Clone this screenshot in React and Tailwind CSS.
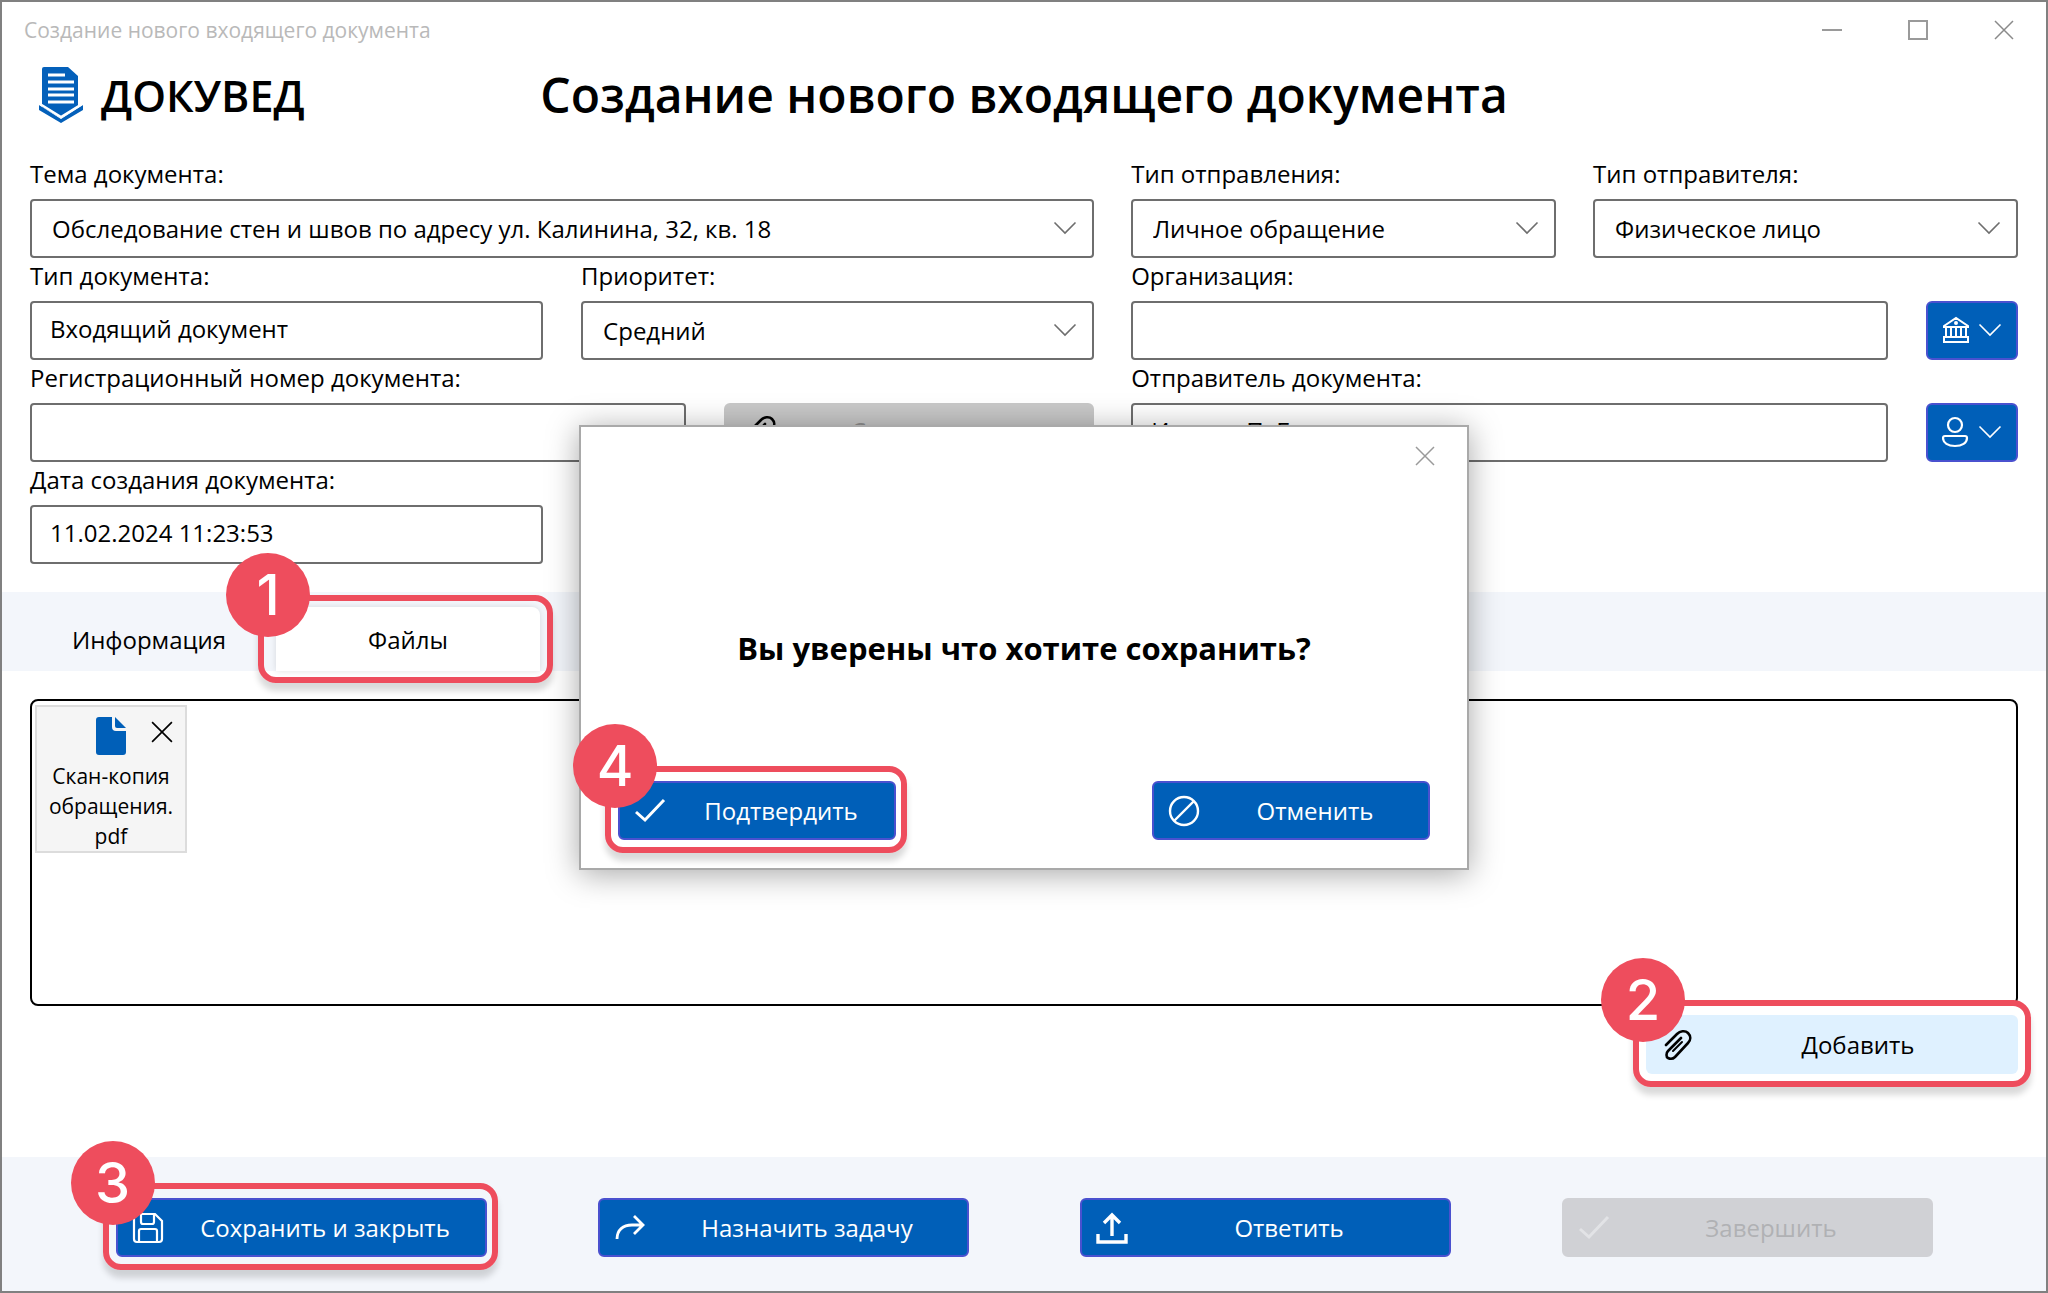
import React from 'react';

const ChevronDown = ({ className }) => (
    <svg className={className} viewBox="0 0 24 14" fill="none" stroke="currentColor" strokeWidth="1.6">
        <path d="M1.5 1.5 12 12 22.5 1.5" />
    </svg>
);

const Logo = () => (
    <svg className="h-14 w-11" viewBox="0 0 44 56">
        <path d="M5 0h24l10 9v31L22 51 3 40V2a2 2 0 0 1 2-2z" fill="#0460ba" />
        <path d="M0 38l22 14 22-14v5L22 56 0 43z" fill="#0460ba" />
        <path d="M1 37l21 13 21-13" fill="none" stroke="#fff" strokeWidth="2.4" />
        <path d="M9 8h17M9 15h26M9 22h26M9 28h26M9 35h26" stroke="#fff" strokeWidth="3" />
    </svg>
);

const CheckIcon = ({ className }) => (
    <svg className={className} viewBox="0 0 32 32" fill="none" stroke="currentColor" strokeWidth="3">
        <path d="M2 17l9 8L30 5" />
    </svg>
);

const BanIcon = ({ className }) => (
    <svg className={className} viewBox="0 0 32 32" fill="none" stroke="currentColor" strokeWidth="2.4">
        <circle cx="16" cy="16" r="14" />
        <path d="M6 26 26 6" />
    </svg>
);

const ClipIcon = ({ className }) => (
    <svg className={className} viewBox="0 0 28 32" fill="none" stroke="currentColor" strokeWidth="2.6" strokeLinecap="round">
        <path d="M2 16 13 5c3-3 8-4 11-1s3 7 0 10L11 28c-2 2-5 2-7 1s-2-5 0-7L17 9" />
        <path d="M9 22 18 13" strokeWidth="2" />
    </svg>
);

const SaveIcon = ({ className }) => (
    <svg className={className} viewBox="0 0 32 32" fill="none" stroke="currentColor" strokeWidth="2.2">
        <path d="M5 2h18l7 7v18a3 3 0 0 1-3 3H5a3 3 0 0 1-3-3V5a3 3 0 0 1 3-3z" />
        <path d="M9 2v8a2 2 0 0 0 2 2h9a2 2 0 0 0 2-2V2M7 30V19a2 2 0 0 1 2-2h14a2 2 0 0 1 2 2v11" />
    </svg>
);

const ForwardIcon = ({ className }) => (
    <svg className={className} viewBox="0 0 32 32" fill="none" stroke="currentColor" strokeWidth="2.8">
        <path d="M3 27c0-9 6-14 15-14h11M20 4l9 9-9 9" />
    </svg>
);

const UploadIcon = ({ className }) => (
    <svg className={className} viewBox="0 0 32 32" fill="none" stroke="currentColor" strokeWidth="3.4">
        <path d="M16 24V3M8 11l8-8 8 8M2 22v8h28v-8" />
    </svg>
);

const BankIcon = ({ className }) => (
    <svg className={className} viewBox="0 0 28 28" fill="none" stroke="currentColor" strokeWidth="2">
        <path d="M2 10 14 2l12 8v1H2zM4 11v10M9 11v10M14 11v10M19 11v10M24 11v10M2 21h24v5H2z" />
        <circle cx="14" cy="7" r="1" />
    </svg>
);

const PersonIcon = ({ className }) => (
    <svg className={className} viewBox="0 0 28 32" fill="none" stroke="currentColor" strokeWidth="2.2">
        <circle cx="13" cy="9" r="7" />
        <path d="M3 20h20a2 2 0 0 1 2 2c0 5-5 8-12 8S1 27 1 22a2 2 0 0 1 2-2z" />
    </svg>
);

const CloseIcon = ({ className }) => (
    <svg className={className} viewBox="0 0 20 20" fill="none" stroke="currentColor" strokeWidth="1.5">
        <path d="M1 1l18 18M19 1 1 19" />
    </svg>
);

const inputClass = 'h-[59px] w-full rounded-sm border-2 border-[#6e6e6e] bg-white text-black';

const Field = ({ id, label, className, children }) => (
    <div className={className}>
        <label htmlFor={id} className="block h-[43px] leading-9">{label}</label>
        {children}
    </div>
);

const TextField = ({ id, label, value, className }) => (
    <Field id={id} label={label} className={className}>
        <input id={id} type="text" defaultValue={value} className={`${inputClass} px-[18px] pb-1`} />
    </Field>
);

const SelectField = ({ id, label, value, className }) => (
    <Field id={id} label={label} className={className}>
        <div className="relative">
            <select id={id} className={`${inputClass} appearance-none px-5`}>
                <option>{value}</option>
            </select>
            <ChevronDown className="pointer-events-none absolute right-[17px] top-[22px] h-[14px] w-6 text-[#6e6e6e]" />
        </div>
    </Field>
);

const IconDropdown = ({ label, children }) => (
    <button type="button" aria-label={label} className="flex h-[59px] w-[92px] shrink-0 items-center justify-between rounded-md border-2 border-[#4a51cf] bg-[#005fb8] px-3.5 pb-0.5 text-white">
        {children}
        <ChevronDown className="h-[14px] w-6" />
    </button>
);

const Callout = ({ number, className }) => (
    <span className={`pointer-events-none absolute rounded-[18px] border-[6px] border-[#ee4d5d] shadow-[0_8px_6px_rgba(0,0,0,0.15)] ${className}`}>
        <span className="absolute -left-[38px] -top-12 flex h-[84px] w-[84px] items-center justify-center rounded-full bg-[#ee4d5d] font-['Inter',sans-serif] text-[56px] font-medium leading-none text-white">
            {number}
        </span>
    </span>
);

const ActionButton = ({ icon: Icon, label, callout, disabled, className }) => (
    <div className={`relative ${className}`}>
        <button
            disabled={disabled}
            className={`flex h-[59px] w-full items-center rounded-md border-2 px-3.5 ${disabled ? 'border-[#d0d1d5] bg-[#d0d1d5] text-[#b0b1b4]' : 'border-[#4a51cf] bg-[#005fb8] text-white'}`}
        >
            <Icon className={`h-8 w-8 shrink-0 ${disabled ? 'text-[#e2e3e6]' : ''}`} />
            <span className="flex-1 pl-4">{label}</span>
        </button>
        {callout && <Callout number={callout} className="-left-[13px] -right-[11px] -top-[15px] -bottom-[13px]" />}
    </div>
);

const ConfirmDialog = () => (
    <div role="dialog" aria-labelledby="confirm-title" className="absolute left-1/2 top-[423px] flex h-[445px] w-[890px] -translate-x-1/2 flex-col border-2 border-[#a9a9a9] bg-white shadow-[0_4px_30px_rgba(0,0,0,0.35)]">
        <div className="flex h-[58px] items-center justify-end pr-8">
            <button aria-label="Закрыть" className="text-[#9a9a9a]"><CloseIcon className="h-5 w-5" /></button>
        </div>
        <h2 id="confirm-title" className="flex flex-1 items-center justify-center pt-24 text-[31px] font-bold">Вы уверены что хотите сохранить?</h2>
        <div className="flex justify-between px-[37px] pb-7 pt-16">
            <ActionButton icon={CheckIcon} label="Подтвердить" callout={4} className="w-[278px]" />
            <ActionButton icon={BanIcon} label="Отменить" className="w-[278px]" />
        </div>
    </div>
);

const App = () => {
    return (
        <div className="relative flex min-h-screen flex-col border-2 border-[#808080] bg-white font-['Open_Sans','Noto_Sans',sans-serif] text-2xl text-black">
            <header className="flex h-14 items-center justify-between pl-[22px] pr-8">
                <span className="text-[21px] text-[#b9b9b9]">Создание нового входящего документа</span>
                <div className="flex items-center gap-[66px] text-[#8a8a8a]">
                    <button aria-label="Свернуть"><span className="block h-0.5 w-5 bg-[#9a9a9a]" /></button>
                    <button aria-label="Развернуть"><span className="block h-5 w-5 border-2 border-[#9a9a9a]" /></button>
                    <button aria-label="Закрыть окно"><CloseIcon className="h-5 w-5" /></button>
                </div>
            </header>

            <div className="grid grid-cols-[1fr_auto_1fr] items-center px-[37px] pb-[26px] pt-0.5">
                <div className="flex h-[70px] items-center gap-[18px]">
                    <Logo />
                    <span className="text-[43px] font-semibold leading-none">ДОКУВЕД</span>
                </div>
                <h1 className="text-5xl font-semibold leading-none">Создание нового входящего документа</h1>
            </div>

            <form className="grid grid-cols-[6fr_5fr] gap-x-[37px] px-7">
                <div>
                    <SelectField id="subject" label="Тема документа:" value="Обследование стен и швов по адресу ул. Калинина, 32, кв. 18" />
                    <div className="grid grid-cols-2 gap-x-[38px]">
                        <TextField id="doc-type" label="Тип документа:" value="Входящий документ" />
                        <SelectField id="priority" label="Приоритет:" value="Средний" />
                    </div>
                    <div className="flex items-end gap-[38px]">
                        <TextField id="reg-number" label="Регистрационный номер документа:" className="flex-1" />
                        <button type="button" disabled className="flex h-[59px] w-[370px] items-center rounded-md bg-[#c8c8c8] px-6 pb-1 text-[#8f8f8f]">
                            <ClipIcon className="h-8 w-7 text-black" />
                            <span className="flex-1 pl-2">Сканировать</span>
                        </button>
                    </div>
                    <div className="grid grid-cols-2 gap-x-[38px]">
                        <TextField id="created-at" label="Дата создания документа:" value="11.02.2024 11:23:53" />
                    </div>
                </div>
                <div>
                    <div className="grid grid-cols-2 gap-x-[37px]">
                        <SelectField id="sending-type" label="Тип отправления:" value="Личное обращение" />
                        <SelectField id="sender-type" label="Тип отправителя:" value="Физическое лицо" />
                    </div>
                    <div className="flex items-end gap-[38px]">
                        <TextField id="organization" label="Организация:" className="flex-1" />
                        <IconDropdown label="Выбрать организацию"><BankIcon className="h-7 w-7" /></IconDropdown>
                    </div>
                    <div className="flex items-end gap-[38px]">
                        <TextField id="sender" label="Отправитель документа:" value="Иванов П. Б." className="flex-1" />
                        <IconDropdown label="Выбрать отправителя"><PersonIcon className="h-8 w-7" /></IconDropdown>
                    </div>
                </div>
            </form>

            <div role="tablist" className="mt-7 flex h-[79px] items-end bg-[#f3f6fb] pl-5">
                <button role="tab" className="h-16 w-[254px] pt-0.5">Информация</button>
                <div className="relative">
                    <button role="tab" aria-selected="true" className="h-16 w-[264px] rounded-t-lg bg-white pt-0.5 shadow-[0_0_6px_rgba(0,0,0,0.12)]">Файлы</button>
                    <Callout number={1} className="-left-[18px] -right-[13px] -top-3 -bottom-3" />
                </div>
            </div>

            <section className="px-7 pt-7">
                <div className="flex h-[307px] items-start rounded-lg border-2 border-black px-[3px] pt-1">
                    <div className="relative flex h-[148px] w-[152px] flex-col items-center border-2 border-[#dcdcdc] bg-[#f5f5f5] pt-2.5 text-[21px] leading-[30px]">
                        <svg className="h-[38px] w-[30px] shrink-0" viewBox="0 0 30 38" fill="#005fb8">
                            <path d="M3 0h13v10a4 4 0 0 0 4 4h10v21a3 3 0 0 1-3 3H3a3 3 0 0 1-3-3V3a3 3 0 0 1 3-3z" />
                            <path d="M19 0l11 11h-9a2 2 0 0 1-2-2z" />
                        </svg>
                        <button aria-label="Удалить файл" className="absolute right-3 top-3.5"><CloseIcon className="h-[22px] w-[22px]" /></button>
                        <p className="pt-1.5 text-center">Скан-копия<br />обращения.<br />pdf</p>
                    </div>
                </div>
                <div className="mt-[9px] flex justify-end">
                    <div className="relative w-[372px]">
                        <button className="flex h-[59px] w-full items-center rounded-md bg-[#dff1ff] px-[18px]">
                            <ClipIcon className="h-8 w-7" />
                            <span className="flex-1 pl-6">Добавить</span>
                        </button>
                        <Callout number={2} className="-left-[13px] -right-[13px] -top-[15px] -bottom-[13px]" />
                    </div>
                </div>
            </section>

            <footer className="mt-auto grid h-[134px] grid-cols-4 items-center justify-items-center bg-[#f3f6fb] px-[58px] pt-[7px]">
                <ActionButton icon={SaveIcon} label="Сохранить и закрыть" callout={3} className="w-[371px]" />
                <ActionButton icon={ForwardIcon} label="Назначить задачу" className="w-[371px]" />
                <ActionButton icon={UploadIcon} label="Ответить" className="w-[371px]" />
                <ActionButton icon={CheckIcon} label="Завершить" disabled className="w-[371px]" />
            </footer>

            <ConfirmDialog />
        </div>
    );
};

export default App;
